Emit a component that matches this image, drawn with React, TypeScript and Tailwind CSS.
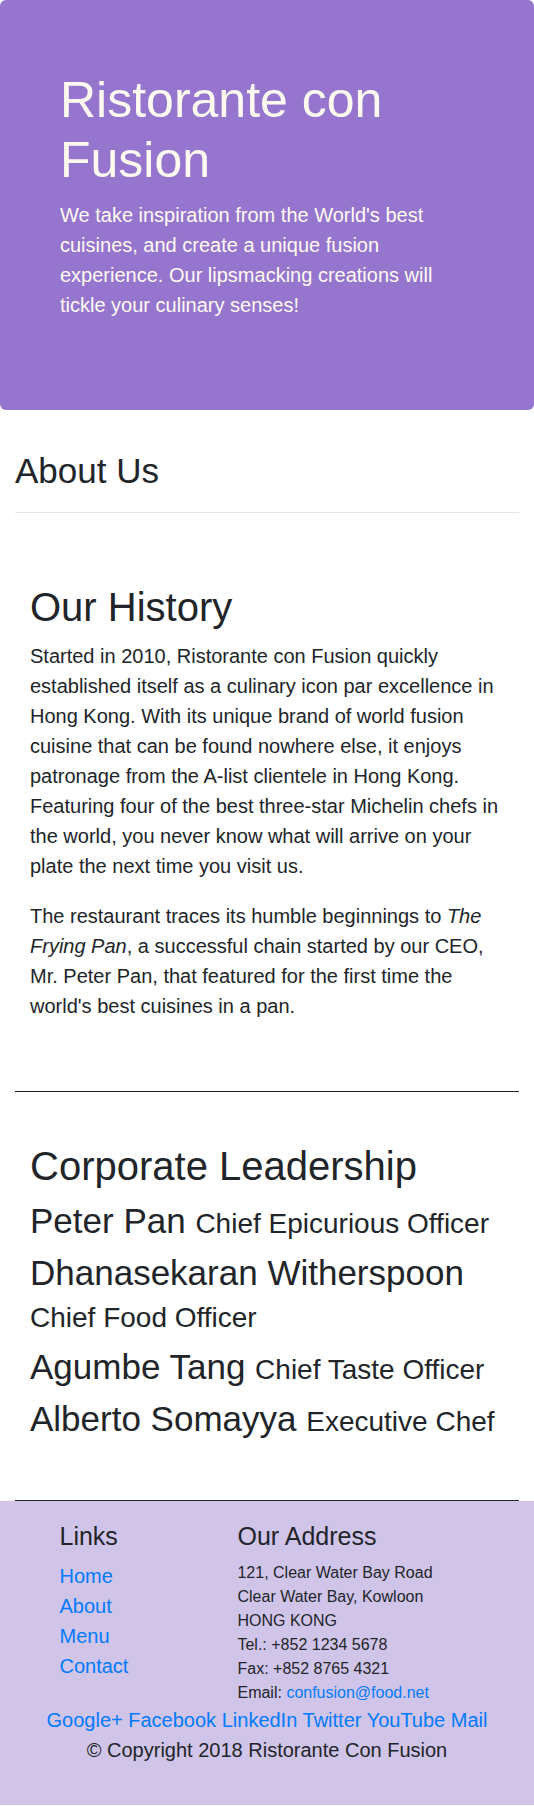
const leaders = [
  { name: "Peter Pan", title: "Chief Epicurious Officer" },
  { name: "Dhanasekaran Witherspoon", title: "Chief Food Officer" },
  { name: "Agumbe Tang", title: "Chief Taste Officer" },
  { name: "Alberto Somayya", title: "Executive Chef" },
];

const links = ["Home", "About", "Menu", "Contact"];
const social = ["Google+", "Facebook", "LinkedIn", "Twitter", "YouTube", "Mail"];

export default function App() {
  return (
    <div className="font-['Liberation_Sans',Arial,sans-serif] text-[20px] leading-[1.5] text-[#212529] bg-white">
      <header className="bg-[#9575CD] text-[#FFFAF0] rounded-[6px] px-[30px] py-[70px]">
        <div className="px-[30px]">
          <h1 className="text-[50px] leading-[1.2] font-normal mb-[10px]">Ristorante con Fusion</h1>
          <p className="mb-[20px]">
            We take inspiration from the World's best cuisines, and create a unique fusion experience. Our
            lipsmacking creations will tickle your culinary senses!
          </p>
        </div>
      </header>

      <main className="px-[15px] pt-[40px]">
        <div>
          <h3 className="text-[35px] leading-[1.2] font-normal">About Us</h3>
          <hr className="my-[20px] border-black/10" />
        </div>

        <section className="px-[15px] py-[50px] border-b border-[#212529]">
          <h2 className="text-[40px] leading-[1.2] font-normal mb-[10px]">Our History</h2>
          <p className="mb-[20px]">
            Started in 2010, Ristorante con Fusion quickly established itself as a culinary icon par excellence in
            Hong Kong. With its unique brand of world fusion cuisine that can be found nowhere else, it enjoys
            patronage from the A-list clientele in Hong Kong. Featuring four of the best three-star Michelin chefs in
            the world, you never know what will arrive on your plate the next time you visit us.
          </p>
          <p className="mb-[20px]">
            The restaurant traces its humble beginnings to <em>The Frying Pan</em>, a successful chain started by our
            CEO, Mr. Peter Pan, that featured for the first time the world's best cuisines in a pan.
          </p>
        </section>

        <section className="px-[15px] py-[50px] border-b border-[#212529]">
          <h2 className="text-[40px] leading-[1.2] font-normal mb-[10px]">Corporate Leadership</h2>
          {leaders.map((l) => (
            <h3 key={l.name} className="text-[35px] leading-[1.2] font-normal mb-[10px]">
              {l.name} <small className="text-[28px]">{l.title}</small>
            </h3>
          ))}
        </section>
      </main>

      <footer className="bg-[#D1C4E9] py-[20px]">
        <div className="flex flex-wrap">
          <div className="w-[33.3333%] ml-[8.3333%] px-[15px]">
            <h5 className="text-[25px] leading-[1.2] font-normal mb-[10px]">Links</h5>
            <ul className="mb-[20px]">
              {links.map((x) => (
                <li key={x}>
                  <a href="#" className="text-[#007bff]">
                    {x}
                  </a>
                </li>
              ))}
            </ul>
          </div>
          <div className="w-[58.3333%] px-[15px]">
            <h5 className="text-[25px] leading-[1.2] font-normal mb-[10px]">Our Address</h5>
            <address className="not-italic text-[16px] leading-[24px]">
              121, Clear Water Bay Road
              <br />
              Clear Water Bay, Kowloon
              <br />
              HONG KONG
              <br />
              Tel.: +852 1234 5678
              <br />
              Fax: +852 8765 4321
              <br />
              Email:{" "}
              <a href="#" className="text-[#007bff]">
                confusion@food.net
              </a>
            </address>
          </div>
          <div className="w-full px-[15px] text-center">
            {social.map((s, i) => (
              <span key={s}>
                <a href="#" className="text-[#007bff]">
                  {s}
                </a>
                {i < social.length - 1 ? " " : ""}
              </span>
            ))}
          </div>
        </div>
        <div className="flex justify-center">
          <p className="px-[15px] mb-[20px]">© Copyright 2018 Ristorante Con Fusion</p>
        </div>
      </footer>
    </div>
  );
}
